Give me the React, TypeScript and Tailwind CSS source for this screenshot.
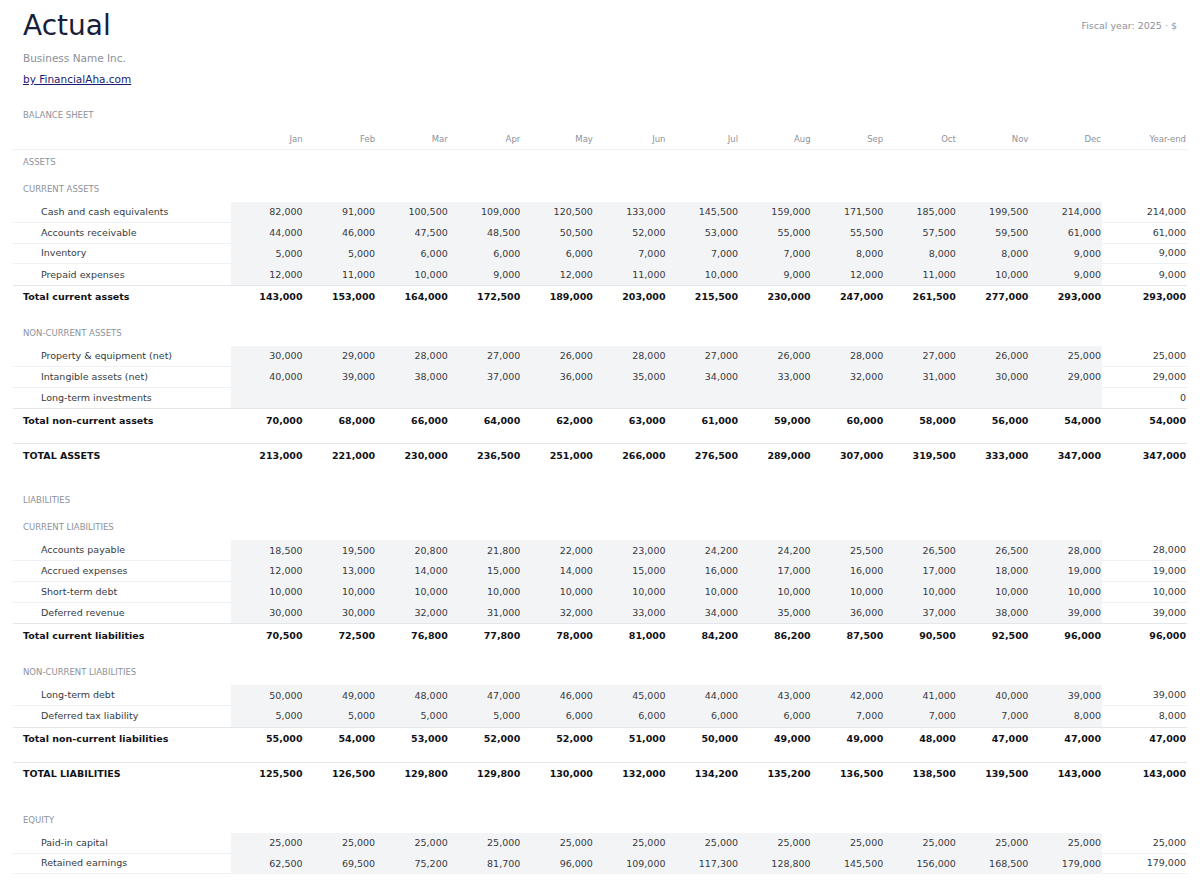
import React from 'react';

type Cells = (string | number | null)[];

interface Line {
  label: string;
  values: Cells;
  yearEnd: string | number;
}

const months = ['Jan', 'Feb', 'Mar', 'Apr', 'May', 'Jun', 'Jul', 'Aug', 'Sep', 'Oct', 'Nov', 'Dec'];

const fmt = (v: string | number | null) => {
  if (v === null || v === '') return '';
  if (typeof v === 'number') return v.toLocaleString('en-US');
  return v;
};

const currentAssets: Line[] = [
  { label: 'Cash and cash equivalents', values: [82000, 91000, 100500, 109000, 120500, 133000, 145500, 159000, 171500, 185000, 199500, 214000], yearEnd: 214000 },
  { label: 'Accounts receivable', values: [44000, 46000, 47500, 48500, 50500, 52000, 53000, 55000, 55500, 57500, 59500, 61000], yearEnd: 61000 },
  { label: 'Inventory', values: [5000, 5000, 6000, 6000, 6000, 7000, 7000, 7000, 8000, 8000, 8000, 9000], yearEnd: 9000 },
  { label: 'Prepaid expenses', values: [12000, 11000, 10000, 9000, 12000, 11000, 10000, 9000, 12000, 11000, 10000, 9000], yearEnd: 9000 },
];

const nonCurrentAssets: Line[] = [
  { label: 'Property & equipment (net)', values: [30000, 29000, 28000, 27000, 26000, 28000, 27000, 26000, 28000, 27000, 26000, 25000], yearEnd: 25000 },
  { label: 'Intangible assets (net)', values: [40000, 39000, 38000, 37000, 36000, 35000, 34000, 33000, 32000, 31000, 30000, 29000], yearEnd: 29000 },
  { label: 'Long-term investments', values: Array(12).fill(null), yearEnd: 0 },
];

const currentLiabilities: Line[] = [
  { label: 'Accounts payable', values: [18500, 19500, 20800, 21800, 22000, 23000, 24200, 24200, 25500, 26500, 26500, 28000], yearEnd: 28000 },
  { label: 'Accrued expenses', values: [12000, 13000, 14000, 15000, 14000, 15000, 16000, 17000, 16000, 17000, 18000, 19000], yearEnd: 19000 },
  { label: 'Short-term debt', values: Array(12).fill(10000), yearEnd: 10000 },
  { label: 'Deferred revenue', values: [30000, 30000, 32000, 31000, 32000, 33000, 34000, 35000, 36000, 37000, 38000, 39000], yearEnd: 39000 },
];

const nonCurrentLiabilities: Line[] = [
  { label: 'Long-term debt', values: [50000, 49000, 48000, 47000, 46000, 45000, 44000, 43000, 42000, 41000, 40000, 39000], yearEnd: 39000 },
  { label: 'Deferred tax liability', values: [5000, 5000, 5000, 5000, 6000, 6000, 6000, 6000, 7000, 7000, 7000, 8000], yearEnd: 8000 },
];

const equity: Line[] = [
  { label: 'Paid-in capital', values: Array(12).fill(25000), yearEnd: 25000 },
  { label: 'Retained earnings', values: [62500, 69500, 75200, 81700, 96000, 109000, 117300, 128800, 145500, 156000, 168500, 179000], yearEnd: 179000 },
];

const sum = (lines: Line[]) => {
  const values = months.map((_, i) => lines.reduce((acc, l) => acc + (Number(l.values[i]) || 0), 0));
  const yearEnd = lines.reduce((acc, l) => acc + (Number(l.yearEnd) || 0), 0);
  return { values, yearEnd };
};

const grid = 'grid grid-cols-[218px_repeat(12,minmax(0,1fr))_85px]';

const SectionRow: React.FC<{ label: string; sub?: boolean }> = ({ label, sub }) => (
  <div className={`${grid} ${sub ? 'h-[28px] pt-[10px]' : 'h-[24px] items-center'}`}>
    <div className="px-[10px] text-[8.5px] leading-[10px] uppercase text-[#8d929b]">{label}</div>
  </div>
);

const DetailRow: React.FC<{ line: Line; last?: boolean }> = ({ line, last }) => (
  <div className={`${grid} h-[20.75px] text-[9.5px] text-[#363a42]`}>
    <div className={`flex items-center pl-[28px] ${last ? '' : 'border-b border-[#eef0f3]'}`}>{line.label}</div>
    {line.values.map((v, i) => (
      <div key={i} className="flex items-center justify-end bg-[#f3f4f6] pr-px">
        {fmt(v)}
      </div>
    ))}
    <div className={`flex items-center justify-end pr-px ${last ? '' : 'border-b border-[#eef0f3]'}`}>{fmt(line.yearEnd)}</div>
  </div>
);

const TotalRow: React.FC<{ label: string; values: Cells; yearEnd: number; upper?: boolean }> = ({ label, values, yearEnd, upper }) => (
  <div className={`${grid} h-[24px] items-center border-t border-[#e4e6ea] text-[9.5px] font-bold text-[#111318]`}>
    <div className={`px-[10px] ${upper ? 'uppercase' : ''}`}>{label}</div>
    {values.map((v, i) => (
      <div key={i} className="text-right pr-px">{fmt(v)}</div>
    ))}
    <div className="text-right pr-px">{fmt(yearEnd)}</div>
  </div>
);

const Group: React.FC<{ lines: Line[]; lastBorder?: boolean }> = ({ lines, lastBorder }) => (
  <>
    {lines.map((l, i) => (
      <DetailRow key={l.label} line={l} last={!lastBorder && i === lines.length - 1} />
    ))}
  </>
);

export default function App() {
  const tca = sum(currentAssets);
  const tnca = sum(nonCurrentAssets);
  const ta = sum([...currentAssets, ...nonCurrentAssets]);
  const tcl = sum(currentLiabilities);
  const tncl = sum(nonCurrentLiabilities);
  const tl = sum([...currentLiabilities, ...nonCurrentLiabilities]);

  return (
    <div className="min-h-screen bg-white px-[13px] pb-[13px] font-['DejaVu_Sans','Liberation_Sans',sans-serif]">
      <div className="flex justify-between px-[10px]">
        <div className="pt-[10px]">
          <h1 className="text-[28px] leading-[32px] font-normal text-[#16203a]">Actual</h1>
          <div className="mt-[9px] text-[10.5px] leading-[14px] text-[#8a8f98]">Business Name Inc.</div>
          <a href="#" className="mt-[7px] block text-[10.5px] leading-[14px] text-[#1c1c72] underline">
            by FinancialAha.com
          </a>
        </div>
        <div className="pt-[19px] text-[9.5px] leading-[13px] text-[#8d929b]">Fiscal year: 2025 · $</div>
      </div>

      <div className="mt-[23px] px-[10px] text-[8.5px] leading-[12px] uppercase text-[#8d929b]">Balance Sheet</div>

      <div className={`${grid} mt-[8px] h-[21px] items-center border-b border-[#eef0f3] text-[8.5px] text-[#8d929b]`}>
        <div />
        {months.map((m) => (
          <div key={m} className="text-right pr-px">{m}</div>
        ))}
        <div className="text-right pr-px">Year-end</div>
      </div>

      <SectionRow label="Assets" />
      <SectionRow label="Current assets" sub />
      <Group lines={currentAssets} />
      <TotalRow label="Total current assets" values={tca.values} yearEnd={tca.yearEnd} />
      <div className="h-[9px]" />
      <SectionRow label="Non-current assets" sub />
      <Group lines={nonCurrentAssets} />
      <TotalRow label="Total non-current assets" values={tnca.values} yearEnd={tnca.yearEnd} />
      <div className="h-[11px]" />
      <TotalRow label="Total assets" values={ta.values} yearEnd={ta.yearEnd} upper />

      <div className="h-[21px]" />
      <SectionRow label="Liabilities" />
      <SectionRow label="Current liabilities" sub />
      <Group lines={currentLiabilities} />
      <TotalRow label="Total current liabilities" values={tcl.values} yearEnd={tcl.yearEnd} />
      <div className="h-[10px]" />
      <SectionRow label="Non-current liabilities" sub />
      <Group lines={nonCurrentLiabilities} />
      <TotalRow label="Total non-current liabilities" values={tncl.values} yearEnd={tncl.yearEnd} />
      <div className="h-[11px]" />
      <TotalRow label="Total liabilities" values={tl.values} yearEnd={tl.yearEnd} upper />

      <div className="h-[19px]" />
      <SectionRow label="Equity" sub />
      <Group lines={equity} lastBorder />
    </div>
  );
}
